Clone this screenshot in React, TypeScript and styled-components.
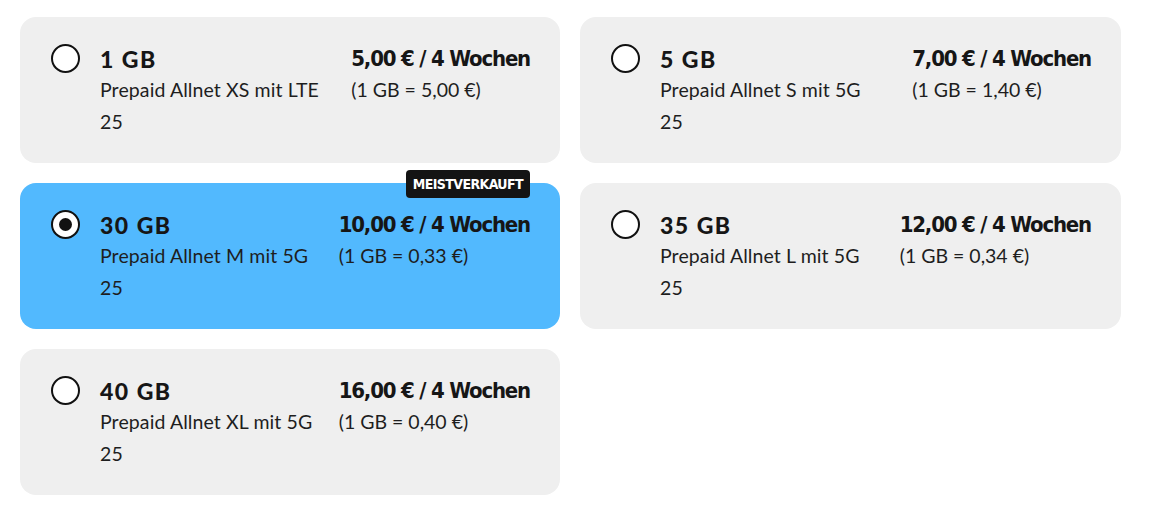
import React from "react";
import styled, { createGlobalStyle } from "styled-components";

const GlobalStyle = createGlobalStyle`
  html, body { margin: 0; padding: 0; background: #ffffff; }
  body { font-family: "Lato", "Liberation Sans", sans-serif; color: #1a1a1a; }
`;

const Grid = styled.div`
  display: grid;
  grid-template-columns: 540px 541px;
  column-gap: 20px;
  row-gap: 20px;
  padding: 17px 0 0 20px;
`;

const Card = styled.label<{ $selected?: boolean }>`
  position: relative;
  display: flex;
  align-items: flex-start;
  height: 146px;
  box-sizing: border-box;
  padding: 27px 30px 0 31px;
  border-radius: 16px;
  background: ${(p) => (p.$selected ? "#52b9fe" : "#efefef")};
  cursor: pointer;
`;

const Radio = styled.span<{ $checked?: boolean }>`
  flex: none;
  width: 29px;
  height: 29px;
  box-sizing: border-box;
  border-radius: 50%;
  border: 2px solid #111;
  background: #fff;
  display: flex;
  align-items: center;
  justify-content: center;
  &::after {
    content: "";
    display: ${(p) => (p.$checked ? "block" : "none")};
    width: 13px;
    height: 13px;
    border-radius: 50%;
    background: #111;
  }
`;

const Info = styled.div`
  flex: 1;
  display: flex;
  flex-direction: column;
  margin-left: 20px;
`;

const Title = styled.div`
  font-family: "Lato", "Open Sans", sans-serif;
  font-weight: 900;
  font-size: 23px;
  line-height: 30px;
  letter-spacing: 1.5px;
  color: #161616;
`;

const Sub = styled.div`
  font-family: "Lato", "Open Sans", sans-serif;
  font-weight: 400;
  font-size: 19.5px;
  line-height: 32px;
  color: #1e1e1e;
  letter-spacing: 0.1px;
`;

const PriceCol = styled.div`
  flex: none;
  display: flex;
  flex-direction: column;
`;

const Price = styled.div`
  font-family: "DejaVu Sans Condensed", "DejaVu Sans", sans-serif;
  font-stretch: condensed;
  font-weight: 700;
  font-size: 22px;
  line-height: 30px;
  color: #161616;
  letter-spacing: -1.2px;
`;

const PerGb = styled.div`
  font-family: "Lato", "Open Sans", sans-serif;
  font-weight: 400;
  font-size: 19.5px;
  line-height: 32px;
  color: #1e1e1e;
`;

const Badge = styled.span`
  position: absolute;
  top: -13px;
  right: 30px;
  height: 28px;
  padding: 0 7px;
  display: flex;
  align-items: center;
  background: #141414;
  color: #fff;
  border-radius: 4px;
  font-family: "DejaVu Sans Condensed", "DejaVu Sans", sans-serif;
  font-stretch: condensed;
  font-weight: 700;
  font-size: 14px;
  letter-spacing: -0.6px;
`;

type Plan = {
  gb: string;
  name: string;
  price: string;
  per: string;
  selected?: boolean;
  badge?: string;
};

const plans: Plan[] = [
  { gb: "1 GB", name: "Prepaid Allnet XS mit LTE", price: "5,00 € / 4 Wochen", per: "(1 GB = 5,00 €)" },
  { gb: "5 GB", name: "Prepaid Allnet S mit 5G", price: "7,00 € / 4 Wochen", per: "(1 GB = 1,40 €)" },
  { gb: "30 GB", name: "Prepaid Allnet M mit 5G", price: "10,00 € / 4 Wochen", per: "(1 GB = 0,33 €)", selected: true, badge: "MEISTVERKAUFT" },
  { gb: "35 GB", name: "Prepaid Allnet L mit 5G", price: "12,00 € / 4 Wochen", per: "(1 GB = 0,34 €)" },
  { gb: "40 GB", name: "Prepaid Allnet XL mit 5G", price: "16,00 € / 4 Wochen", per: "(1 GB = 0,40 €)" },
];

export default function App() {
  return (
    <>
      <GlobalStyle />
      <Grid>
        {plans.map((p) => (
          <Card key={p.gb} $selected={p.selected}>
            {p.badge && <Badge>{p.badge}</Badge>}
            <Radio $checked={p.selected} />
            <Info>
              <Title>{p.gb}</Title>
              <Sub>{p.name}</Sub>
              <Sub>25</Sub>
            </Info>
            <PriceCol>
              <Price>{p.price}</Price>
              <PerGb>{p.per}</PerGb>
            </PriceCol>
          </Card>
        ))}
      </Grid>
    </>
  );
}
